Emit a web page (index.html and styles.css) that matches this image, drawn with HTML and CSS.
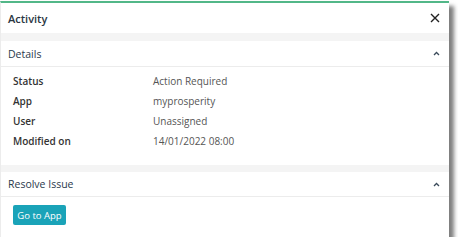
FILE: index.html
```html
<!DOCTYPE html>
<html lang="en">
<head>
  <meta charset="UTF-8">
  <title>Activity</title>
  <link rel="stylesheet" href="styles.css">
</head>
<body>
  <div class="panel">
    <div class="panel-head">
      <span class="title">Activity</span>
      <svg class="close" width="10" height="10" viewBox="0 0 10 10">
        <path d="M1 1L9 9M9 1L1 9" stroke="#222" stroke-width="1.4" fill="none"/>
      </svg>
    </div>
    <div class="section details">
      <div class="section-head">
        <span>Details</span>
        <svg class="caret" width="7" height="5" viewBox="0 0 7 5">
          <path d="M1 4L3.5 1.5L6 4" stroke="#3a4a5a" stroke-width="1.3" fill="none"/>
        </svg>
      </div>
      <div class="rows">
        <div class="row"><span class="label">Status</span><span class="value">Action Required</span></div>
        <div class="row"><span class="label">App</span><span class="value">myprosperity</span></div>
        <div class="row"><span class="label">User</span><span class="value">Unassigned</span></div>
        <div class="row"><span class="label">Modified on</span><span class="value">14/01/2022 08:00</span></div>
      </div>
    </div>
    <div class="section resolve">
      <div class="section-head">
        <span>Resolve Issue</span>
        <svg class="caret" width="7" height="5" viewBox="0 0 7 5">
          <path d="M1 4L3.5 1.5L6 4" stroke="#3a4a5a" stroke-width="1.3" fill="none"/>
        </svg>
      </div>
      <div class="actions">
        <button class="btn">Go to App</button>
      </div>
    </div>
  </div>
</body>
</html>
```

FILE: styles.css
```css
*{
  margin: 0;
  padding: 0;
  box-sizing: border-box;
}
body{
  background: #fff;
  font-family: "Open Sans", "Noto Sans", sans-serif;
  font-size: 10px;
  color: #333;
}
.panel{
  width: 449px;
  margin-top: 1px;
  border-top: 2px solid #52b788;
  border-left: 1px solid #ececec;
  background: #f4f4f4;
  box-shadow: 5px 5px 4px rgba(0,0,0,.5);
}
.panel-head{
  height: 30px;
  background: #fff;
  display: flex;
  align-items: center;
  justify-content: space-between;
  padding: 0 9px 0 7px;
}
.title{
  font-size: 11px;
  font-weight: 600;
  color: #2b3642;
}
.section{
  background: #fff;
  margin-top: 8px;
}
.resolve{
  margin-top: 7px;
}
.section-head{
  height: 26px;
  display: flex;
  align-items: center;
  justify-content: space-between;
  padding: 0 9px 0 7px;
  border-bottom: 1px solid #ececec;
  font-size: 10.5px;
  color: #2a3a4c;
}
.resolve .section-head{
  height: 25px;
}
.rows{
  padding: 4px 0 14px 12px;
}
.row{
  height: 20px;
  display: flex;
  align-items: center;
}
.label{
  width: 140px;
  font-weight: 600;
  color: #333;
}
.value{
  color: #555;
}
.actions{
  padding: 8px 12px 12px;
}
.btn{
  width: 53px;
  height: 20px;
  border: none;
  border-radius: 2px;
  background: #1aa3b8;
  color: #fff;
  font-family: "Open Sans", "Noto Sans", sans-serif;
  font-size: 9.5px;
}
```
